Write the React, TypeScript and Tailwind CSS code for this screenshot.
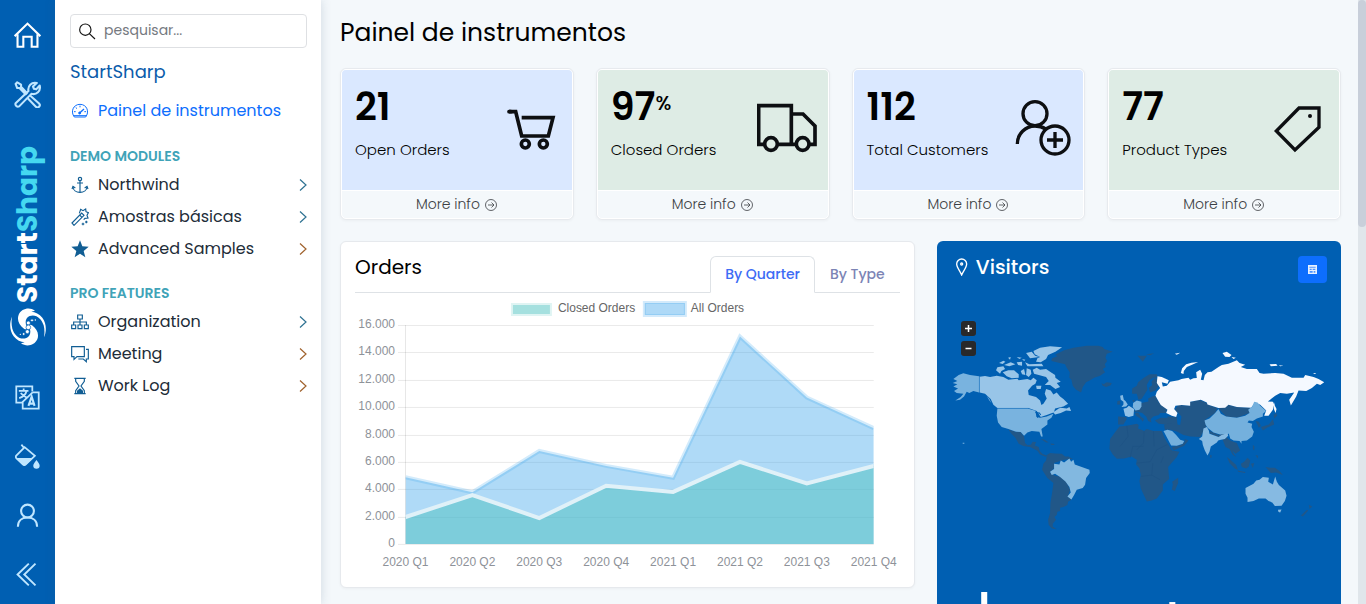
import type { ReactNode } from "react";

type IconProps = { className?: string };

const line = {
  fill: "none",
  stroke: "currentColor",
  strokeLinecap: "butt" as const,
  strokeLinejoin: "miter" as const,
};

/* ---------- Rail icons ---------- */

const HomeIcon = () => (
  <svg viewBox="0 0 84 84" className="size-[27px]" {...line} strokeWidth="6.5">
    <path d="M2 44 L42 5 L82 44" />
    <path d="M11 38 V77 H29 V46 H55 V77 H73 V38" />
  </svg>
);

const ToolsIcon = () => (
  <svg viewBox="0 0 84 84" className="size-[27px]" {...line} strokeWidth="6.5" strokeLinejoin="round">
    <path d="M5 9 L10 4 L22 11 L22 18 L40 37 L36 41 L17 22 L10 22 Z" />
    <path d="M50 45 L78 70 A7 7 0 0 1 68 80 L42 53" />
    <path d="M5 69 L45 31 C42 16 54 2 71 6 L59 17 L62 24 L69 26 L80 14 C84 32 70 44 54 40 L16 79 A8 8 0 0 1 5 69 Z" />
  </svg>
);

const TranslateIcon = () => (
  <svg viewBox="0 0 78 78" className="size-[25px]" {...line} strokeWidth="5.5">
    <path d="M23 55 H4 V4 H54 V20" />
    <path d="M55 23 H74 V74 H24 V53 L55 23" />
    <path d="M12 18 H42 M27 11 V18 M36 18 C34 29 26 37 13 41 M18 25 C23 32 28 36 38 40" />
    <path d="M42 65 L52 36 L61 65 M45 58 H58" strokeWidth="6.5" />
  </svg>
);

const FillIcon = () => (
  <svg viewBox="0 0 78 78" className="size-[25px]" {...line} strokeWidth="5.5">
    <path d="M20 2 L28 12 L4 36 Q1 40 4 44 L25 64 Q29 67 33 64 L62 37 L28 8" />
    <path d="M6 44 H56 L33 66 Q29 69 25 66 Z" fill="currentColor" stroke="none" />
    <path d="M67 50 C73 58 77 62 77 68 A10 9 0 0 1 57 68 C57 62 61 58 67 50Z" fill="currentColor" stroke="none" />
  </svg>
);

const UserIcon = () => (
  <svg viewBox="0 0 78 78" className="size-[25px]" {...line} strokeWidth="6.5">
    <circle cx="39" cy="25" r="20" />
    <path d="M9 74 C9 54 23 45 39 45 C55 45 69 54 69 74" />
  </svg>
);

const CollapseIcon = () => (
  <svg viewBox="0 0 78 78" className="size-[25px]" {...line} strokeWidth="6">
    <path d="M43 5 L8 39 L43 73 M64 5 L29 39 L64 73" />
  </svg>
);

const swirlArm =
  "M75 8 C58 -4 34 2 26 20 C20 36 27 51 42 62 C47 66 53 64 50 57 C44 42 47 29 59 24 C78 17 95 32 101 52 C104 64 104 76 102 88 C110 70 110 46 97 29 C88 17 76 12 64 11 Z";

const Swirl = () => (
  <svg viewBox="0 0 108 114" className="h-[38px] w-9" fill="#fff">
    <path d={swirlArm} />
    <path d={swirlArm} transform="rotate(180 54 57)" />
    <g stroke="#005fb2" strokeWidth="2">
      <circle cx="55" cy="45" r="6" />
      <circle cx="55" cy="58" r="7" />
      <circle cx="52" cy="71" r="6" />
      <circle cx="66" cy="37" r="4" />
      <circle cx="41" cy="78" r="4" />
    </g>
    <circle cx="76" cy="36" r="2" />
    <circle cx="31" cy="79" r="2" />
  </svg>
);

/* ---------- Menu icons ---------- */

const GaugeIcon = () => (
  <svg viewBox="0 0 54 54" className="size-[18px]" {...line} strokeWidth="3">
    <path d="M10 45 C-2 30 6 7 27 7 C48 7 56 30 44 45 Z" />
    <path d="M8 41 H46" />
    <path d="M25 34 L39 21" strokeWidth="4" />
    <circle cx="26" cy="33" r="3" fill="currentColor" />
    <path d="M27 11 V16 M14 16 L18 20 M9 29 H14 M40 29 H45" />
  </svg>
);

const AnchorIcon = () => (
  <svg viewBox="0 0 54 54" className="size-[18px]" {...line} strokeWidth="3.5">
    <circle cx="27" cy="9" r="5" />
    <path d="M27 14 V49 M18 21 H36" />
    <path d="M6 32 C6 43 16 49 27 49 C38 49 48 43 48 32" />
    <path d="M3 39 L6 31 L13 36 M51 39 L48 31 L41 36" />
  </svg>
);

const WandIcon = () => (
  <svg viewBox="0 0 54 54" className="size-[18px]" {...line} strokeWidth="3.5">
    <path d="M3 45 L32 15 L39 22 L9 52 Z M26 21 L33 28" />
    <path d="M25 16 L29 4 L36 8 L44 3 L45 11 L52 14 L48 22 L51 30 L42 31 L38 35" />
    <path d="M46 38 V46 M42 42 H50 M36 44 V52 M32 48 H40" />
  </svg>
);

const StarIcon = () => (
  <svg viewBox="0 0 54 54" className="size-[18px]" fill="currentColor">
    <path d="M27 1 L34 19 L53 20 L38 33 L43 52 L27 41 L11 52 L16 33 L1 20 L20 19 Z" />
  </svg>
);

const SitemapIcon = () => (
  <svg viewBox="0 0 54 54" className="size-[18px]" {...line} strokeWidth="3.5">
    <path d="M20 6 H34 V18 H20 Z M2 36 H14 V47 H2 Z M21 36 H33 V47 H21 Z M40 36 H52 V47 H40 Z" />
    <path d="M27 18 V36 M8 36 V27 H46 V36" />
  </svg>
);

const ChatIcon = () => (
  <svg viewBox="0 0 54 54" className="size-[18px]" {...line} strokeWidth="3.5">
    <path d="M2 5 H40 V35 H18 L9 43 V35 H2 Z" />
    <path d="M45 13 H52 V42 H46 V50 L37 42 H22" />
  </svg>
);

const HourglassIcon = () => (
  <svg viewBox="0 0 54 54" className="size-[18px]" {...line} strokeWidth="3.5">
    <path d="M10 4 H44 M10 50 H44 M14 4 V13 L24 27 L14 41 V50 M40 4 V13 L30 27 L40 41 V50" />
    <path d="M18 49 V41 L27 34 L36 41 V49 Z" fill="currentColor" stroke="none" />
  </svg>
);

const ChevronIcon = ({ className }: IconProps) => (
  <svg viewBox="0 0 8 14" className={`h-3.5 w-2 ${className ?? ""}`} {...line} strokeWidth="1.2">
    <path d="M1 1.5 L7 7 L1 12.5" />
  </svg>
);

/* ---------- Summary icons ---------- */

const CartIcon = () => (
  <svg viewBox="0 0 180 180" className="size-[60px]" {...line} strokeWidth="11">
    <path d="M24 41 H44 L62 114 H142 L156 59 H62" />
    <path d="M24 41 H30" strokeLinecap="round" />
    <circle cx="73" cy="138" r="12" />
    <circle cx="127" cy="138" r="12" />
  </svg>
);

const TruckIcon = () => (
  <svg viewBox="0 0 180 180" className="size-[60px]" {...line} strokeWidth="11">
    <path d="M24 139 H5 V23 H103 V139" />
    <path d="M62 139 H118 M103 48 H138 L174 84 V139 H156" />
    <circle cx="42" cy="138" r="19" />
    <circle cx="137" cy="138" r="19" />
  </svg>
);

const AddUserIcon = () => (
  <svg viewBox="-8 0 180 180" className="size-[60px]" {...line} strokeWidth="10">
    <circle cx="61" cy="47" r="36" />
    <path d="M8 138 C8 108 32 84 61 84 C74 84 84 87 93 93" />
    <circle cx="121" cy="126" r="42" />
    <path d="M121 102 V150 M97 126 H145" />
  </svg>
);

const TagIcon = () => (
  <svg viewBox="-11 0 180 180" className="size-[60px]" {...line} strokeWidth="10">
    <path d="M82 30 H142 V88 L70 156 L14 99 Z" />
    <circle cx="115" cy="54" r="6" fill="currentColor" stroke="none" />
  </svg>
);

/* ---------- Rail ---------- */

function RailButton({ label, children, active }: { label: string; children: ReactNode; active?: boolean }) {
  return (
    <button
      type="button"
      aria-label={label}
      className={`flex h-[59px] w-full shrink-0 items-center justify-center ${active ? "text-white" : "text-[#bfe6ff]"}`}
    >
      {children}
    </button>
  );
}

function Rail() {
  return (
    <nav className="flex w-[55px] shrink-0 flex-col bg-[#005fb2] pt-1.5">
      <RailButton label="Home" active>
        <HomeIcon />
      </RailButton>
      <RailButton label="Tools">
        <ToolsIcon />
      </RailButton>
      <div className="flex flex-1 flex-col items-center justify-center gap-1">
        <div className="rotate-180 text-[28px] leading-8 font-bold text-white [writing-mode:vertical-rl]">
          Start<span className="text-[#45d8f0]">Sharp</span>
        </div>
        <Swirl />
      </div>
      <RailButton label="Language">
        <TranslateIcon />
      </RailButton>
      <RailButton label="Theme">
        <FillIcon />
      </RailButton>
      <RailButton label="Account">
        <UserIcon />
      </RailButton>
      <RailButton label="Collapse">
        <CollapseIcon />
      </RailButton>
    </nav>
  );
}

/* ---------- Menu ---------- */

type MenuEntry = { label: string; icon: ReactNode; chevron: string };

const demoModules: MenuEntry[] = [
  { label: "Northwind", icon: <AnchorIcon />, chevron: "text-[#2f7292]" },
  { label: "Amostras básicas", icon: <WandIcon />, chevron: "text-[#2f7292]" },
  { label: "Advanced Samples", icon: <StarIcon />, chevron: "text-[#a0622d]" },
];

const proFeatures: MenuEntry[] = [
  { label: "Organization", icon: <SitemapIcon />, chevron: "text-[#2f7292]" },
  { label: "Meeting", icon: <ChatIcon />, chevron: "text-[#a0622d]" },
  { label: "Work Log", icon: <HourglassIcon />, chevron: "text-[#a0622d]" },
];

function MenuGroup({ title, items }: { title: string; items: MenuEntry[] }) {
  return (
    <section>
      <h2 className="mb-[3px] text-[14px] leading-5 font-semibold text-[#40a3b8]">{title}</h2>
      <ul>
        {items.map((item) => (
          <li key={item.label}>
            <a href="#" className="flex h-8 items-center gap-[9px] pl-px text-[16px] text-[#212c38]">
              <span className="text-[#115e94]">{item.icon}</span>
              <span className="flex-1">{item.label}</span>
              <ChevronIcon className={item.chevron} />
            </a>
          </li>
        ))}
      </ul>
    </section>
  );
}

function Menu() {
  return (
    <aside className="relative z-10 w-[266px] shrink-0 bg-white pt-3.5 pr-3.5 pl-[15px] shadow-[0_0_10px_rgba(60,90,120,0.2)]">
      <label className="flex h-[34px] items-center gap-2 rounded border border-[#dee0e3] px-[7px]">
        <svg viewBox="0 0 54 54" className="size-[18px] text-[#111]" {...line} strokeWidth="3.5">
          <circle cx="22" cy="23" r="17" />
          <path d="M34 35 L51 51" />
        </svg>
        <input
          type="search"
          aria-label="pesquisar"
          placeholder="pesquisar..."
          className="min-w-0 flex-1 bg-transparent pb-0.5 text-[14px] outline-none placeholder:text-[#75797f]"
        />
      </label>
      <div className="mt-3 text-[18px] leading-6 text-[#0b5cab]">StartSharp</div>
      <a href="#" className="mt-[11px] flex h-8 items-center gap-[9px] pl-px text-[16px] text-[#0d6efd]">
        <GaugeIcon />
        Painel de instrumentos
      </a>
      <div className="mt-[19px] flex flex-col gap-[18px]">
        <MenuGroup title="DEMO MODULES" items={demoModules} />
        <MenuGroup title="PRO FEATURES" items={proFeatures} />
      </div>
    </aside>
  );
}

/* ---------- Summary cards ---------- */

type Summary = { value: string; unit?: string; label: string; icon: ReactNode; tone: string };

const summaries: Summary[] = [
  { value: "21", label: "Open Orders", icon: <CartIcon />, tone: "bg-[#dae8ff]" },
  { value: "97", unit: "%", label: "Closed Orders", icon: <TruckIcon />, tone: "bg-[#deece5]" },
  { value: "112", label: "Total Customers", icon: <AddUserIcon />, tone: "bg-[#dae8ff]" },
  { value: "77", label: "Product Types", icon: <TagIcon />, tone: "bg-[#deece5]" },
];

function SummaryCard({ value, unit, label, icon, tone }: Summary) {
  return (
    <article className="overflow-hidden rounded-md border border-[#e7eaee] shadow-[0_1px_3px_rgba(0,0,0,0.04)]">
      <div className="rounded-[5px] border border-white">
        <div className={`flex h-[120px] justify-between rounded-t pr-[11px] pl-[13px] ${tone}`}>
          <div className="pt-[11px]">
            <div className="flex h-[50px] items-center text-[38px] font-semibold text-black">
              {value}
              {unit && <span className="mb-1.5 text-[20px] font-medium">{unit}</span>}
            </div>
            <p className="mt-[7px] text-[15px] leading-6 font-light text-black">{label}</p>
          </div>
          <div className="pt-7 text-[#0d0f12]">{icon}</div>
        </div>
        <a
          href="#"
          className="flex h-7 items-center justify-center gap-1 border-t border-white text-[14px] font-light text-[#3c3f44]"
        >
          More info
          <svg viewBox="0 0 14 14" className="size-3.5" {...line} strokeWidth="0.8">
            <circle cx="7" cy="7" r="5.5" />
            <path d="M4 7 H10 M7.5 4.5 L10 7 L7.5 9.5" />
          </svg>
        </a>
      </div>
    </article>
  );
}

/* ---------- Orders chart ---------- */

const quarters = ["2020 Q1", "2020 Q2", "2020 Q3", "2020 Q4", "2021 Q1", "2021 Q2", "2021 Q3", "2021 Q4"];
const allOrders = [4870, 3770, 6790, 5700, 4830, 15150, 10700, 8460];
const closedOrders = [1960, 3570, 1890, 4250, 3800, 5990, 4420, 5690];
const ticks = ["0", "2.000", "4.000", "6.000", "8.000", "10.000", "12.000", "14.000", "16.000"];

const plot = { left: 50.5, right: 519, top: 28, bottom: 247 };
const xAt = (i: number) => plot.left + ((plot.right - plot.left) * i) / (quarters.length - 1);
const yAt = (v: number) => plot.bottom - ((plot.bottom - plot.top) * v) / 16000;
const linePath = (values: number[]) => values.map((v, i) => `${i ? "L" : "M"}${xAt(i)} ${yAt(v)}`).join(" ");
const areaPath = (values: number[]) => `${linePath(values)} L${plot.right} ${plot.bottom} L${plot.left} ${plot.bottom} Z`;

function OrdersChart() {
  return (
    <svg viewBox="0 0 545 290" className="block w-full font-['Liberation_Sans',Arial,sans-serif] text-[12px]">
      <defs>
        <clipPath id="plot-area">
          <rect x={plot.left} y="0" width={plot.right - plot.left} height={plot.bottom + 0.5} />
        </clipPath>
      </defs>
      <rect x="157" y="7" width="39" height="11" fill="#a5e0df" stroke="#dff4f3" strokeWidth="2" />
      <text x="203" y="15" fill="#666">Closed Orders</text>
      <rect x="289" y="5" width="42" height="14" fill="#aed9f7" stroke="#d3eafb" strokeWidth="2" />
      <rect x="290.5" y="6.5" width="39" height="11" fill="none" stroke="#94cdf4" />
      <text x="336" y="15" fill="#666">All Orders</text>
      {ticks.map((tick, i) => {
        const y = Math.round(yAt(i * 2000)) + 0.5;
        return (
          <g key={tick}>
            <path d={`M43 ${y} H${plot.right}`} stroke="#000" strokeOpacity="0.09" />
            <text x="40" y={y + 3} textAnchor="end" fill="#8e9299">{tick}</text>
          </g>
        );
      })}
      <path d={`M${plot.left} ${plot.top} V${plot.bottom}`} stroke="#000" strokeOpacity="0.1" />
      <g clipPath="url(#plot-area)">
        <path d={areaPath(allOrders)} fill="#36a2eb" fillOpacity="0.4" />
        <path d={linePath(allOrders)} fill="none" stroke="#36a2eb" strokeOpacity="0.22" strokeWidth="4" />
        <path d={areaPath(closedOrders)} fill="#4bc0c0" fillOpacity="0.5" />
        <path d={linePath(closedOrders)} fill="none" stroke="#e0f1f8" strokeWidth="4" />
      </g>
      {quarters.map((quarter, i) => (
        <text key={quarter} x={xAt(i)} y="269" textAnchor="middle" fill="#8e9299">{quarter}</text>
      ))}
    </svg>
  );
}

function OrdersCard() {
  return (
    <section className="col-span-7 rounded-md border border-[#e6e9ed] bg-white px-3.5 pt-3.5 shadow-[0_1px_3px_rgba(0,0,0,0.04)]">
      <header className="flex justify-between border-b border-[#dee2e6]">
        <h2 className="text-[20px] leading-[22px] text-black">Orders</h2>
        <div role="tablist" className="-mb-px flex text-[14px] font-medium">
          <button
            type="button"
            role="tab"
            aria-selected="true"
            className="h-[37px] rounded-t-md border border-[#dee2e6] border-b-white bg-white px-3.5 text-[#3d6cf5]"
          >
            By Quarter
          </button>
          <button
            type="button"
            role="tab"
            aria-selected="false"
            className="h-[37px] border border-transparent px-3.5 text-[#7c84b5]"
          >
            By Type
          </button>
        </div>
      </header>
      <div className="pt-1">
        <OrdersChart />
      </div>
    </section>
  );
}

/* ---------- Visitors map ---------- */

const americasDark = [
  "M205 299 L228 306 L242 307 L252 320 L255 340 L262 346 L272 345 L278 336 L288 337 L284 347 L296 352 L299 364 L308 373 L322 378 L316 381 L300 374 L292 363 L270 352 L250 349 L236 342 L226 324 L214 312Z",
  "M302 328 L314 330 L326 338 L318 338Z M331 341 L341 342 L344 346 L333 346Z",
  "M336 86 L352 80 L345 75 L372 62 L400 54 L440 48 L475 48 L488 52 L492 58 L518 66 L500 72 L496 84 L501 94 L494 104 L497 112 L488 118 L495 128 L480 138 L462 144 L450 152 L438 158 L428 172 L423 188 L408 180 L398 168 L394 150 L388 144 L389 128 L380 114 L375 104 L350 98 L334 94Z",
  "M484 160 L490 164 L500 158 L515 160 L512 167 L498 172 L488 168Z",
  "M320 376 L330 370 L345 371 L365 372 L375 380 L385 380 L398 388 L372 390 L342 400 L342 415 L330 428 L345 438 L360 440 L378 455 L390 480 L383 500 L394 510 L384 516 L382 526 L370 532 L360 534 L360 544 L352 546 L350 556 L343 562 L348 570 L338 582 L338 590 L350 598 L335 596 L326 586 L324 570 L330 550 L331 520 L336 490 L340 460 L322 445 L306 420 L310 402 L318 392Z",
];

const canada = [
  "M119 141 L135 139 L150 142 L170 138 L190 142 L205 150 L232 147 L236 152 L262 148 L272 152 L280 144 L290 152 L286 162 L276 168 L264 182 L266 196 L288 202 L300 212 L304 226 L310 222 L320 206 L314 192 L318 178 L332 182 L340 194 L350 188 L360 200 L370 208 L384 222 L370 230 L345 236 L342 246 L356 236 L362 234 L380 236 L388 232 L393 244 L378 242 L362 250 L345 254 L340 248 L320 256 L302 262 L290 244 L265 235 L172 235 L160 225 L152 208 L135 192 L119 188Z",
  "M168 122 L172 113 L190 110 L195 118 L184 124 L180 132Z M188 128 L205 122 L222 122 L236 134 L236 144 L215 146 L200 140Z",
  "M177 100 L190 93 L196 96 L188 103Z M192 106 L212 98 L226 104 L208 110Z M204 84 L212 82 L210 90Z M230 82 L245 84 L238 88Z M230 98 L246 96 L246 108 L234 106Z M246 88 L256 90 L252 94Z",
  "M258 70 L275 66 L285 78 L298 82 L270 86Z M280 64 L300 54 L330 50 L366 53 L346 66 L324 76 L318 88 L302 98 L288 96 L292 86 L300 82 L284 74Z M255 98 L268 104 L305 102 L310 110 L262 110Z",
  "M242 124 L252 118 L256 136 L246 134Z M260 116 L272 120 L274 132 L266 142 L258 136Z M278 120 L290 114 L300 120 L318 118 L330 126 L345 136 L346 144 L362 156 L350 160 L360 172 L346 178 L330 166 L314 166 L326 154 L318 142 L296 136 L282 132Z M288 168 L304 168 L302 178 L290 178Z",
];

const unitedStates = [
  "M38 160 L52 154 L40 148 L56 136 L70 131 L90 136 L117 140 L117 188 L100 184 L88 190 L80 186 L72 200 L60 210 L46 212 L62 202 L70 192 L50 190 L42 184 L54 176 L40 170 L52 164Z",
  "M172 237 L265 237 L286 243 L289 262 L300 264 L320 260 L340 252 L334 264 L322 272 L322 284 L304 298 L308 320 L303 320 L298 306 L275 304 L262 308 L252 318 L242 307 L228 306 L205 298 L185 292 L174 278 L170 258Z",
  "M140 198 L148 208 L154 220 L148 212Z M68 339 h5 v3 h-5Z",
];

const brazil =
  "M330 426 L342 418 L342 402 L358 404 L362 392 L372 398 L388 386 L393 396 L400 390 L404 404 L425 412 L448 420 L449 430 L438 445 L435 465 L428 475 L410 480 L402 496 L394 509 L382 500 L392 488 L388 472 L376 455 L360 442 L345 432 L335 436Z";

const easternDark = [
  "M448 530 L470 528 L500 522 L506 526 L504 536 L522 544 L530 538 L550 544 L575 544 L584 566 L592 580 L606 602 L628 606 L620 622 L604 640 L594 652 L597 688 L578 704 L578 722 L560 746 L545 752 L530 755 L524 742 L512 716 L508 694 L512 676 L508 656 L498 644 L500 630 L484 620 L462 626 L440 627 L428 614 L418 598 L420 568 L436 546Z",
  "M624 684 L624 700 L614 724 L605 720 L608 704 L606 696Z",
  "M486 416 L500 408 L504 398 L520 385 L538 374 L560 374 L562 384 L550 384 L538 392 L530 405 L532 420 L522 436 L514 448 L505 450 L500 432 L486 432Z",
  "M544 396 L552 386 L562 388 L564 410 L556 422 L540 428 L536 415 L546 406Z",
  "M513 460 L535 455 L534 446 L546 440 L556 438 L566 458 L580 465 L590 480 L588 490 L570 490 L566 496 L550 500 L542 508 L544 518 L534 514 L528 500 L516 490 L502 486 L490 486 L500 476Z",
  "M494 490 L504 488 L512 500 L522 508 L518 516 L510 506 L498 498Z M486 452 L494 450 L492 458Z",
  "M444 500 L468 502 L470 508 L460 524 L444 524Z M442 454 L450 452 L450 464 L441 464Z",
  "M554 512 L572 504 L600 504 L620 508 L624 524 L600 526 L566 522Z",
  "M590 500 L622 502 L614 480 L624 466 L660 468 L656 458 L688 450 L710 460 L716 466 L742 475 L735 490 L705 510 L708 532 L690 562 L660 560 L640 556 L620 545 L602 540 L584 540 L582 524 L606 520Z",
  "M604 592 L632 586 L643 576 L644 568 L655 572 L642 588 L610 602Z",
  "M745 476 L775 465 L800 472 L843 474 L838 490 L800 504 L768 500Z",
  "M718 543 L745 555 L768 550 L770 556 L746 562 L720 552Z",
  "M756 566 L764 558 L780 572 L800 580 L810 602 L796 612 L786 602 L792 614 L798 622 L788 616 L778 598 L766 592Z",
  "M770 622 L778 628 L798 646 L803 660 L794 656 L778 640Z M802 662 L826 667 L824 670 L804 666Z",
  "M812 642 L822 636 L832 624 L840 632 L836 650 L828 656 L815 652Z M842 642 L852 640 L848 655Z",
  "M848 585 L853 590 L852 602 L848 598Z M856 616 L864 618 L862 626Z M886 652 L900 654 L914 654 L928 664 L938 676 L918 668 L902 670Z",
  "M910 496 L918 490 L921 498 L912 506Z M908 508 L912 524 L890 534 L878 542 L872 532 L896 524Z M856 514 L866 516 L872 528 L866 534Z",
  "M1016 765 L1026 770 L1018 778Z M1010 780 L1014 782 L998 800 L992 797Z",
  "M502 318 L530 318 L518 336Z M528 314 L552 311 L540 317Z M720 616 h4 v8 h-4Z",
];

const russia = [
  "M562 380 L575 382 L596 392 L592 402 L575 398 L578 410 L590 408 L600 396 L625 392 L634 388 L655 384 L660 390 L670 386 L680 385 L678 368 L690 360 L696 372 L692 390 L700 392 L704 376 L712 368 L724 366 L745 352 L755 346 L775 342 L800 332 L808 340 L825 345 L812 352 L830 358 L860 358 L868 370 L880 372 L915 370 L940 372 L965 384 L1000 384 L1005 376 L1030 382 L1045 388 L1062 398 L1050 406 L1040 402 L1025 415 L1008 424 L985 422 L978 440 L962 467 L957 450 L972 428 L950 432 L930 430 L915 438 L893 455 L908 456 L912 464 L908 480 L895 498 L882 498 L888 482 L870 465 L855 458 L843 474 L800 472 L775 465 L765 474 L745 475 L712 464 L710 458 L692 450 L660 456 L660 468 L635 466 L616 468 L612 478 L622 490 L618 502 L605 498 L588 490 L592 480 L572 466 L566 456 L556 438 L560 426 L570 415 L560 400Z",
  "M632 370 L636 356 L648 344 L664 339 L684 337 L664 346 L650 352 L641 364 L640 373Z",
  "M757 310 L770 306 L784 316 L778 322 L765 321Z M784 322 L797 324 L790 328Z M898 344 L918 343 L922 348 L902 350Z M926 347 L940 348 L930 350Z M614 312 L630 309 L620 315Z M1028 370 L1038 370 L1034 373Z",
  "M911 456 L914 468 L919 478 L916 490 L911 478Z",
];

const china =
  "M703 512 L718 506 L735 490 L745 478 L752 492 L768 500 L800 504 L825 498 L838 490 L834 480 L846 470 L852 456 L862 458 L870 468 L888 484 L878 492 L878 500 L860 506 L848 514 L836 512 L832 518 L846 522 L844 532 L851 546 L846 560 L830 572 L814 574 L814 582 L808 574 L790 572 L780 566 L776 552 L750 554 L730 548 L712 534 L706 524Z";

const india =
  "M700 536 L710 532 L716 542 L718 552 L745 562 L754 556 L772 550 L774 558 L764 568 L752 570 L744 572 L740 578 L722 590 L718 606 L712 617 L704 602 L698 586 L696 574 L686 568 L696 560Z";

const australia =
  "M826 715 L850 702 L858 692 L868 690 L878 682 L896 684 L894 696 L908 704 L915 680 L920 696 L926 706 L945 722 L949 738 L944 754 L934 768 L914 769 L906 758 L895 754 L886 746 L866 746 L850 754 L832 757 L832 744 L826 732Z M923 780 L934 779 L930 788 L925 787Z";

function WorldMap() {
  return (
    <svg viewBox="-9 -44 1212 720" className="block w-full" role="img" aria-label="Visitors by country">
      <g fill="#215788">
        {americasDark.map((d) => (
          <path key={d} d={d} />
        ))}
      </g>
      <g fill="#98c5e8">
        {canada.map((d) => (
          <path key={d} d={d} />
        ))}
      </g>
      <g fill="#79b3df">
        {unitedStates.map((d) => (
          <path key={d} d={d} />
        ))}
      </g>
      <path d="M118 140 V188 M172 236 H265" stroke="#4a94d0" strokeWidth="2" />
      <path d="M286 248 L298 250 L302 256 M294 252 L292 264" stroke="#005fb2" strokeWidth="3" fill="none" />
      <path d={brazil} fill="#82b8e0" />
      <g transform="translate(90 -240)">
        <g fill="#215788">
          {easternDark.map((d) => (
            <path key={d} d={d} />
          ))}
        </g>
        <path
          d="M470 528 L474 560 L450 590 M522 544 L520 580 L500 600 M550 544 L552 590 M480 624 L488 590 L520 590 M500 640 L540 636 L560 600 L592 584 M512 680 L545 676 L570 690 M545 676 L548 640 M572 640 L580 620"
          fill="none"
          stroke="#1d5284"
          strokeWidth="2"
        />
        <path d="M620 504 L622 486 L634 500 L630 526 L622 524Z" fill="#005fb2" />
        <g fill="#f5f9ff">
          {russia.map((d) => (
            <path key={d} d={d} />
          ))}
        </g>
        <path d={china} fill="#74b0dd" />
        <path d={india} fill="#86bae2" />
        <path d={australia} fill="#86bae2" />
        <path d="M580 544 L592 540 L606 544 L618 556 L630 570 L642 574 L638 582 L620 588 L603 587 L592 566Z" fill="#74b0dd" />
        <path d="M450 438 L458 436 L461 450 L466 454 L473 464 L468 470 L454 472 L460 464 L460 456 L452 450Z" fill="#86bae2" />
        <path d="M460 477 L470 474 L476 468 L492 478 L490 498 L476 502 L465 498Z" fill="#93c2e7" />
        <path d="M489 460 L500 452 L514 456 L514 470 L508 480 L496 482 L488 472Z" fill="#79b3df" />
      </g>
    </svg>
  );
}

const visits = [100, 54, 48, 60, 42, 66, 50, 58, 72, 46, 64, 90, 52, 60];

function VisitsBars() {
  return (
    <svg viewBox="0 0 374 100" className="block w-full" fill="#fff" aria-hidden="true">
      {visits.map((v, i) => (
        <rect key={i} x={30 + i * 17} y={100 - v} width="6" height={v} />
      ))}
    </svg>
  );
}

function VisitorsCard() {
  return (
    <section className="relative col-span-5 rounded-md bg-[#005fb2] pb-8 text-white">
      <header className="flex items-start justify-between px-3.5 pt-[15px]">
        <h2 className="flex items-center gap-2 pl-1 text-[20px] leading-[22px] font-medium">
          <svg viewBox="0 0 39 54" className="h-[18px] w-[13px]" {...line} strokeWidth="4">
            <path d="M20 51 C15 39 5 28 5 18 A15 15 0 0 1 35 18 C35 28 25 39 20 51Z" />
            <circle cx="20" cy="18" r="3" />
          </svg>
          Visitors
        </h2>
        <button
          type="button"
          aria-label="Date range"
          className="flex h-[27px] w-[29px] items-center justify-center rounded bg-[#0d6efd]"
        >
          <svg viewBox="0 0 27 27" className="size-[9px]">
            <path d="M0 0 H27 V27 H0Z" fill="#e8f1ff" />
            <path d="M4 5 H23 V8 H4Z M5 11 H11 V15 H5Z M14 11 H22 V15 H14Z M5 18 H14 V23 H5Z M17 18 H22 V23 H17Z" fill="#4d94fe" />
          </svg>
        </button>
      </header>
      <div className="relative pt-8">
        <WorldMap />
        <div className="absolute top-[38px] left-6 flex flex-col gap-[5px]">
          <button type="button" aria-label="Zoom in" className="flex size-[15px] items-center justify-center rounded-[3px] bg-[#292929]">
            <svg viewBox="0 0 9 9" className="size-[9px]" stroke="#fff" strokeWidth="1.5">
              <path d="M1 4.5 H8 M4.5 1 V8" />
            </svg>
          </button>
          <button type="button" aria-label="Zoom out" className="flex size-[15px] items-center justify-center rounded-[3px] bg-[#292929]">
            <svg viewBox="0 0 9 9" className="size-[9px]" stroke="#fff" strokeWidth="1.5">
              <path d="M1.5 4.5 H7.5" />
            </svg>
          </button>
        </div>
      </div>
      <div className="mt-[37px] px-3.5">
        <VisitsBars />
      </div>
    </section>
  );
}

/* ---------- Page ---------- */

export default function App() {
  return (
    <div className="flex h-screen overflow-hidden bg-[#f4f8fb] font-[Poppins,Inter,sans-serif]">
      <Rail />
      <Menu />
      <main className="min-w-0 flex-1 overflow-y-auto pr-[17px] pb-6 pl-[19px] [scrollbar-width:none]">
        <h1 className="pt-[15px] text-[25px] leading-9 text-black">Painel de instrumentos</h1>
        <div className="mt-[17px] grid grid-cols-4 gap-[22px]">
          {summaries.map((summary) => (
            <SummaryCard key={summary.label} {...summary} />
          ))}
        </div>
        <div className="mt-[21px] grid grid-cols-12 items-start gap-[22px]">
          <OrdersCard />
          <VisitorsCard />
        </div>
      </main>
      <div className="w-2 shrink-0 bg-[#e0e6eb]" aria-hidden="true">
        <div className="h-[227px] rounded-full bg-[#c8cfda]" />
      </div>
    </div>
  );
}
